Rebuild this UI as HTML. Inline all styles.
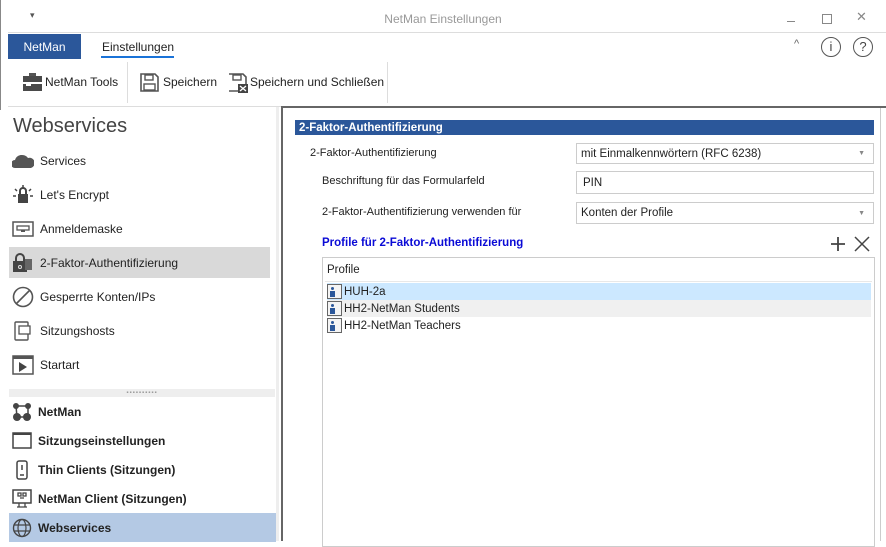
<!DOCTYPE html>
<html><head><meta charset="utf-8"><style>
*{margin:0;padding:0;box-sizing:border-box}
body{width:886px;height:541px;overflow:hidden;background:#fff;font-family:"Liberation Sans",sans-serif;font-size:12px;color:#222;position:relative}
.a{position:absolute}
.it{position:absolute;left:9px;width:261px;height:31px;display:flex;align-items:center;font-size:12px}
.it svg{margin-left:3px;margin-right:6px}
.b{font-weight:bold}
.dd{position:absolute;left:576px;width:298px;border:1px solid #ccc;padding-left:4px;display:flex;align-items:center;font-size:11.5px}
.dd .ar{position:absolute;right:8px;font-size:7px;color:#888}
.row{position:absolute;left:327px;width:544px;height:17px;display:flex;align-items:center;font-size:11.5px}
.pi{width:15px;height:15px;border:1px solid #666;background:#f4f4f4;margin-right:2px;position:relative}
.pi:before{content:"";position:absolute;left:3px;top:2px;width:3px;height:3px;border-radius:50%;background:#2b579a}
.pi:after{content:"";position:absolute;left:2px;top:6px;width:5px;height:6px;background:#2b579a}
</style></head><body>
<div class="a" style="left:0;top:0;width:1px;height:110px;background:#888"></div>
<div class="a" style="left:30px;top:10px;font-size:9px;color:#555">▾</div>
<div class="a" style="left:0;width:886px;top:12px;text-align:center;color:#999;font-size:12px">NetMan Einstellungen</div>
<div class="a" style="left:787px;top:21px;width:8px;height:1px;background:#888"></div>
<div class="a" style="left:822px;top:14px;width:10px;height:10px;border:1px solid #888"></div>
<div class="a" style="left:856px;top:9px;color:#888;font-size:13px">✕</div>
<div class="a" style="left:8px;top:32px;width:878px;height:1px;background:#ddd"></div>
<div class="a" style="left:8px;top:34px;width:73px;height:25px;background:#2b579a;color:#fff;display:flex;align-items:center;justify-content:center">NetMan</div>
<div class="a" style="left:102px;top:40px;color:#222">Einstellungen</div>
<div class="a" style="left:101px;top:56px;width:73px;height:2px;background:#1a73d8"></div>
<div class="a" style="left:794px;top:38px;color:#666;font-size:11px">^</div>
<div class="a" style="left:821px;top:37px;width:20px;height:20px;border:1.5px solid #555;border-radius:50%;text-align:center;font-size:13px;line-height:17px;color:#444">i</div>
<div class="a" style="left:853px;top:37px;width:20px;height:20px;border:1.5px solid #555;border-radius:50%;text-align:center;font-size:13px;line-height:17px;color:#444">?</div>
<svg class="a" style="left:23px;top:73px" width="19" height="18"><rect x="6" y="0" width="7" height="3" fill="#555"/><rect x="0" y="3" width="19" height="15" fill="#4a4a4a"/><rect x="0" y="9" width="19" height="2" fill="#fff"/><rect x="3" y="11" width="5" height="2" fill="#fff"/></svg>
<div class="a" style="left:45px;top:75px">NetMan Tools</div>
<div class="a" style="left:127px;top:62px;width:1px;height:41px;background:#ddd"></div>
<svg class="a" style="left:140px;top:73px" width="19" height="19"><path d="M1 1h14l3 3v14H1z" fill="none" stroke="#555" stroke-width="1.6"/><rect x="5" y="2" width="8" height="5" fill="none" stroke="#555" stroke-width="1.4"/><rect x="4" y="11" width="11" height="6" fill="none" stroke="#555" stroke-width="1.4"/></svg>
<div class="a" style="left:163px;top:75px">Speichern</div>
<svg class="a" style="left:228px;top:73px" width="20" height="20"><path d="M1 1h14l3 3v8M11 18H1z" fill="none" stroke="#555" stroke-width="1.6"/><rect x="5" y="2" width="8" height="5" fill="none" stroke="#555" stroke-width="1.4"/><rect x="10" y="11" width="10" height="9" fill="#444"/><path d="M12 13l6 5M18 13l-6 5" stroke="#fff" stroke-width="1.3"/></svg>
<div class="a" style="left:250px;top:75px">Speichern und Schließen</div>
<div class="a" style="left:387px;top:62px;width:1px;height:41px;background:#ddd"></div>
<div class="a" style="left:8px;top:106px;width:274px;height:1px;background:#ddd"></div>
<div class="a" style="left:13px;top:115px;font-size:20px;color:#444">Webservices</div>
<div class="it" style="top:145px"><svg width="22" height="16"><path d="M3 15a4 4 0 010-8 7 6 0 0113-2 4 4 0 013 10z" fill="#555"/></svg>Services</div>
<div class="it" style="top:179px"><svg width="22" height="20"><rect x="6" y="9" width="10" height="9" fill="#444"/><path d="M8 9V6a3 3 0 016 0v3" fill="none" stroke="#444" stroke-width="2"/><path d="M11 0v3M3 4l2 2M19 4l-2 2M1 11h3M18 11h3" stroke="#444" stroke-width="1.5"/></svg>Let's Encrypt</div>
<div class="it" style="top:213px"><svg width="22" height="16"><rect x="1" y="1" width="20" height="14" fill="none" stroke="#555" stroke-width="1.5"/><rect x="5" y="5" width="12" height="4" fill="none" stroke="#555" stroke-width="1.3"/><rect x="9" y="9" width="4" height="2" fill="#555"/></svg>Anmeldemaske</div>
<div class="it" style="top:247px;background:#d9d9d9"><svg width="22" height="20"><rect x="1" y="8" width="14" height="11" fill="#444"/><path d="M4 8V5a4 4 0 018 0v3" fill="none" stroke="#444" stroke-width="2"/><rect x="13" y="6" width="7" height="11" fill="#666"/><circle cx="8" cy="14" r="1.5" fill="none" stroke="#ddd"/></svg>2-Faktor-Authentifizierung</div>
<div class="it" style="top:281px"><svg width="22" height="22"><circle cx="11" cy="11" r="9.5" fill="none" stroke="#555" stroke-width="1.6"/><path d="M4 18L18 4" stroke="#555" stroke-width="1.6"/></svg>Gesperrte Konten/IPs</div>
<div class="it" style="top:315px"><svg width="22" height="22"><rect x="3" y="2" width="13" height="18" rx="1" fill="none" stroke="#555" stroke-width="1.4"/><rect x="7" y="6" width="11" height="8" fill="#fff" stroke="#555" stroke-width="1.3"/></svg>Sitzungshosts</div>
<div class="it" style="top:349px"><svg width="22" height="20"><rect x="1" y="1" width="20" height="18" fill="none" stroke="#555" stroke-width="1.5"/><rect x="1" y="1" width="20" height="3" fill="#555"/><path d="M7 7l8 5-8 5z" fill="#444"/></svg>Startart</div>
<div class="a" style="left:9px;top:389px;width:266px;height:8px;background:#eee;text-align:center;font-size:6px;color:#999;line-height:8px;letter-spacing:1px">▪▪▪▪▪▪▪▪▪▪</div>
<div class="it b" style="top:397px;height:29px"><svg width="20" height="20"><circle cx="4" cy="4" r="3" fill="#444"/><circle cx="16" cy="4" r="3" fill="#444"/><circle cx="5" cy="15" r="4" fill="#444"/><circle cx="15" cy="15" r="4" fill="#444"/><path d="M4 4h12v11H5z" fill="none" stroke="#444" stroke-width="1.5"/></svg>NetMan</div>
<div class="it b" style="top:426px;height:29px"><svg width="20" height="18"><rect x="1" y="1" width="18" height="15" fill="none" stroke="#444" stroke-width="1.5"/><rect x="1" y="1" width="18" height="2" fill="#444"/></svg>Sitzungseinstellungen</div>
<div class="it b" style="top:455px;height:29px"><svg width="20" height="20"><rect x="5" y="1" width="10" height="18" rx="2" fill="none" stroke="#444" stroke-width="1.5"/><path d="M10 5v5M8 15h4" stroke="#444" stroke-width="1.5"/></svg>Thin Clients (Sitzungen)</div>
<div class="it b" style="top:484px;height:29px"><svg width="20" height="20"><rect x="1" y="1" width="18" height="13" fill="none" stroke="#444" stroke-width="1.5"/><path d="M7 14v4M13 14v4M5 18h10M6 4h3v3H6zM11 4h3v3h-3zM8 9h4" stroke="#444" stroke-width="1.3" fill="none"/></svg>NetMan Client (Sitzungen)</div>
<div class="it b" style="top:513px;height:29px;width:267px;background:#b4c9e4"><svg width="20" height="20"><circle cx="10" cy="10" r="8.5" fill="none" stroke="#444" stroke-width="1.4"/><ellipse cx="10" cy="10" rx="4" ry="8.5" fill="none" stroke="#444" stroke-width="1.2"/><path d="M2 7h16M2 13h16" stroke="#444" stroke-width="1.2"/></svg>Webservices</div>
<div class="a" style="left:276px;top:107px;width:3px;height:434px;background:#eee"></div>
<div class="a" style="left:281px;top:106px;width:605px;height:2px;background:#666"></div>
<div class="a" style="left:281px;top:106px;width:2px;height:435px;background:#666"></div>
<div class="a" style="left:880px;top:108px;width:1px;height:433px;background:#ccc"></div>
<div class="a b" style="left:295px;top:120px;width:579px;height:15px;background:#2b579a;color:#fff;font-size:11.5px;padding-left:4px;line-height:16px">2-Faktor-Authentifizierung</div>
<div class="a" style="left:310px;top:147px;font-size:11px">2-Faktor-Authentifizierung</div>
<div class="dd" style="top:143px;height:21px">mit Einmalkennwörtern (RFC 6238)<span class="ar">▼</span></div>
<div class="a" style="left:322px;top:175px;font-size:11px">Beschriftung für das Formularfeld</div>
<div class="dd" style="top:171px;height:23px;padding-left:6px">PIN</div>
<div class="a" style="left:322px;top:206px;font-size:11px">2-Faktor-Authentifizierung verwenden für</div>
<div class="dd" style="top:202px;height:22px">Konten der Profile<span class="ar">▼</span></div>
<div class="a b" style="left:322px;top:237px;color:#0a0ad6;font-size:11.5px">Profile für 2-Faktor-Authentifizierung</div>
<svg class="a" style="left:830px;top:236px" width="16" height="16"><path d="M8 1v14M1 8h14" stroke="#444" stroke-width="1.8"/></svg>
<svg class="a" style="left:854px;top:236px" width="16" height="16"><path d="M1 1l14 14M15 1L1 15" stroke="#444" stroke-width="1.5"/></svg>
<div class="a" style="left:322px;top:257px;width:553px;height:290px;border:1px solid #ccc"></div>
<div class="a" style="left:327px;top:264px;font-size:11.5px">Profile</div>
<div class="a" style="left:325px;top:281px;width:547px;height:1px;background:#e8e8e8"></div>
<div class="row" style="top:283px;background:#cce8ff"><span class="pi"></span>HUH-2a</div>
<div class="row" style="top:300px;background:#f0f0f0"><span class="pi"></span>HH2-NetMan Students</div>
<div class="row" style="top:317px"><span class="pi"></span>HH2-NetMan Teachers</div>
</body></html>
